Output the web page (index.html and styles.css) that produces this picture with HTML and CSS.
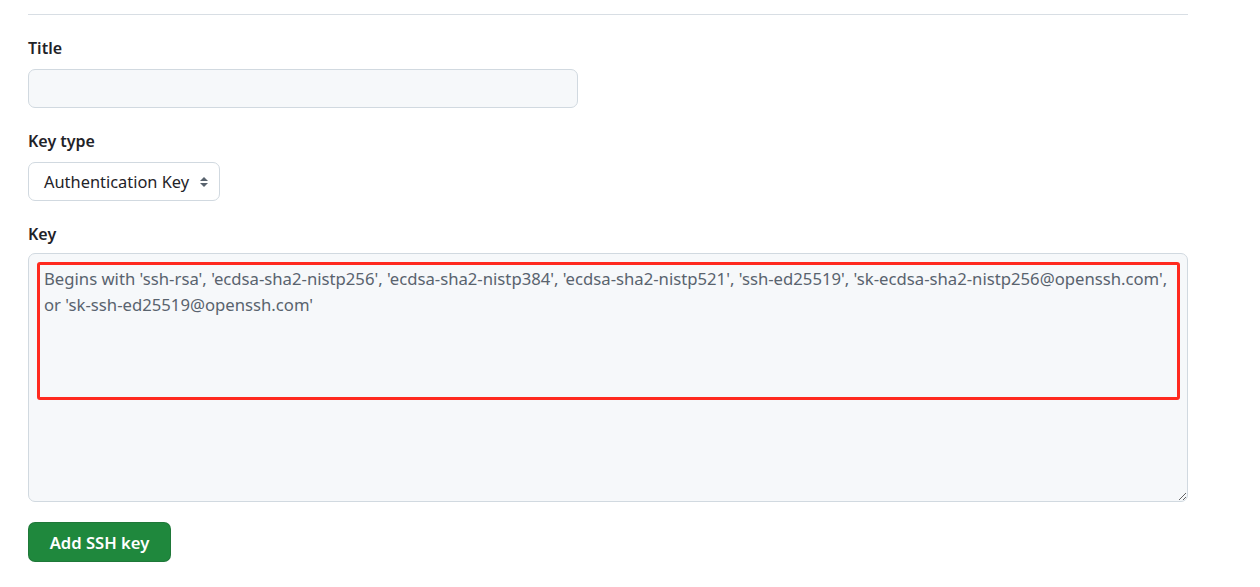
FILE: index.html
```html
<!DOCTYPE html>
<html lang="en">
<head>
<meta charset="utf-8">
<title>Add new SSH key</title>
<link rel="stylesheet" href="styles.css">
</head>
<body>
<div class="page">
  <hr class="divider">
  <form class="form">
    <div class="form-group">
      <label class="label" for="title">Title</label>
      <input class="input" id="title" type="text">
    </div>
    <div class="form-group">
      <label class="label" for="type">Key type</label>
      <div class="select">
        <span class="select-text">Authentication Key</span>
        <svg class="select-arrow" width="10" height="16" viewBox="0 0 10 16"><path d="M5 3 L9 7 H1 Z" fill="#59636e"/><path d="M5 13 L9 9 H1 Z" fill="#59636e"/></svg>
      </div>
    </div>
    <div class="form-group key-group">
      <label class="label" for="key">Key</label>
      <div class="textarea-wrap">
        <textarea class="textarea" id="key" placeholder="Begins with 'ssh-rsa', 'ecdsa-sha2-nistp256', 'ecdsa-sha2-nistp384', 'ecdsa-sha2-nistp521', 'ssh-ed25519', 'sk-ecdsa-sha2-nistp256@openssh.com', or 'sk-ssh-ed25519@openssh.com'"></textarea>
        <div class="highlight"></div>
      </div>
    </div>
    <button class="btn" type="button">Add SSH key</button>
  </form>
</div>
</body>
</html>
```
FILE: styles.css
```css
html, body {
  margin: 0;
  padding: 0;
  background: #ffffff;
}
body {
  font-family: "Noto Sans", "Open Sans", sans-serif;
  color: #1f2328;
}
.page {
  padding: 14px 0 0 28px;
  width: 1160px;
}
.divider {
  margin: 0;
  border: 0;
  height: 1px;
  background: #d8dee4;
}
.form {
  display: flex;
  flex-direction: column;
  align-items: flex-start;
  padding-top: 21px;
}
.form-group {
  display: flex;
  flex-direction: column;
  align-items: flex-start;
  margin-bottom: 21px;
  width: 100%;
}
.label {
  font-size: 16px;
  font-weight: 600;
  line-height: 24px;
  margin-bottom: 9px;
}
.input {
  box-sizing: border-box;
  width: 550px;
  height: 39px;
  margin: 0;
  background: #f6f8fa;
  border: 1px solid #d1d9e0;
  border-radius: 7px;
  font: inherit;
}
.select {
  box-sizing: border-box;
  width: 192px;
  height: 39px;
  display: flex;
  align-items: center;
  justify-content: space-between;
  padding: 0 10px 0 15px;
  background: #ffffff;
  border: 1px solid #d1d9e0;
  border-radius: 7px;
  font-size: 16.4px;
  color: #1f2328;
}
.textarea-wrap {
  position: relative;
  width: 100%;
}
.key-group .label {
  margin-bottom: 7px;
}
.textarea {
  display: block;
  box-sizing: border-box;
  width: 1160px;
  height: 249px;
  margin: 0;
  padding: 12px 15px;
  background: #f6f8fa;
  border: 1px solid #d1d9e0;
  border-radius: 7px;
  font-family: "Noto Sans", "Open Sans", sans-serif;
  font-size: 16.7px;
  line-height: 26px;
  color: #1f2328;
  resize: vertical;
}
.textarea::placeholder {
  color: #59636e;
  opacity: 1;
}
.highlight {
  position: absolute;
  left: 9px;
  top: 9px;
  width: 1143px;
  height: 138px;
  box-sizing: border-box;
  border: 3px solid #ff2a1f;
  border-radius: 3px;
  pointer-events: none;
}
.btn {
  box-sizing: border-box;
  width: 143px;
  height: 40px;
  margin-top: -1px;
  background: #1f883d;
  color: #ffffff;
  border: 1px solid rgba(31, 35, 40, 0.15);
  border-radius: 7px;
  font-family: "Noto Sans", "Open Sans", sans-serif;
  font-size: 16.6px;
  font-weight: 600;
  padding: 0;
}
```
